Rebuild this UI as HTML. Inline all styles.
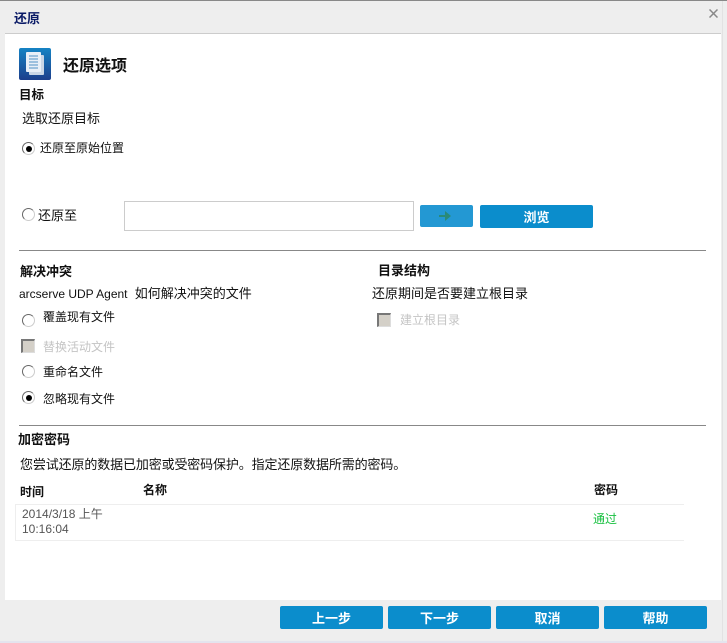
<!DOCTYPE html>
<html lang="zh"><head><meta charset="utf-8"><style>
html,body{margin:0;padding:0}
body{width:727px;height:643px;position:relative;overflow:hidden;background:#eee;font-family:"Liberation Sans","Noto Sans CJK SC",sans-serif;font-size:13px;color:#111}
.t{position:absolute;white-space:nowrap;line-height:16px}
.s{font-size:12px}
.b{font-weight:bold}
.btn{position:absolute;background:#0b8dcc;color:#fff;font-weight:bold;text-align:center;border-radius:2px;font-size:13px}
.r{position:absolute;width:11px;height:11px;border-radius:50%;border:1px solid #666;border-right-color:#ccc;border-bottom-color:#ccc;background:#fff}
.r.on:after{content:"";position:absolute;left:2.5px;top:2.5px;width:6px;height:6px;border-radius:50%;background:#000}
.c{position:absolute;width:11px;height:11px;background:#d4d0c8;border:1px solid #ddd;border-left:2px solid #777;border-top:2px solid #777}
.l{position:absolute;height:1px;background:#888}
.g{color:#c4c4c4}
</style></head><body>
<div style="position:absolute;left:0;top:0;width:727px;height:1px;background:#888"></div>
<div style="position:absolute;left:5px;top:33px;width:716px;height:567px;background:#fff;border-top:1px solid #ccc;box-sizing:border-box"></div>
<div style="position:absolute;left:722px;top:1px;width:1px;height:640px;background:#e2e2e2"></div>
<div style="position:absolute;left:0;top:641px;width:727px;height:2px;background:#e4e4ee"></div>
<div class="t b" style="left:14px;top:11px;color:#0a1a66">还原</div>
<svg style="position:absolute;left:709px;top:9px" width="9" height="9" viewBox="0 0 9 9"><path d="M.5 .5L8.500 8.500M8.500 .5L.5 8.500" stroke="#888" stroke-width="1.500" fill="none"/></svg>

<svg style="position:absolute;left:19px;top:48px" width="32" height="32" viewBox="0 0 32 32">
<defs><linearGradient id="a" x1="0" y1="0" x2="0" y2="1"><stop offset="0" stop-color="#1583c4"/><stop offset="1" stop-color="#1c3f8c"/></linearGradient></defs>
<rect width="32" height="32" rx="2" fill="url(#a)"/>
<rect x="10" y="7" width="15" height="20" rx="1" fill="#c9d6e6"/>
<rect x="7" y="4" width="15" height="20" rx="1" fill="#e8eff7"/>
<path d="M10 8h9M10 11h9M10 14h9M10 17h9M10 20h9" stroke="#6fa3d0" stroke-width="1.200"/>
</svg>
<div class="t b" style="left:63px;top:57px;font-size:16px;line-height:20px">还原选项</div>
<div class="t b" style="left:19px;top:87px;font-size:12.500px">目标</div>
<div class="t" style="left:22px;top:111px">选取还原目标</div>
<div class="r on" style="left:22px;top:142px"></div>
<div class="t s" style="left:40px;top:140px">还原至原始位置</div>

<div class="r" style="left:22px;top:208px"></div>
<div class="t" style="left:38px;top:208px">还原至</div>
<div style="position:absolute;left:124px;top:201px;width:290px;height:30px;box-sizing:border-box;border:1px solid #ccc;background:#fff"></div>
<div class="btn" style="left:420px;top:205px;width:53px;height:22px;background:#2398d3"></div>
<svg style="position:absolute;left:439px;top:209px" width="13" height="14" viewBox="0 0 13 14"><path d="M0 6h6V2l6 5-6 5V8H0z" fill="#2a8a78"/></svg>
<div class="btn" style="left:480px;top:205px;width:113px;height:23px;line-height:26px">浏览</div>
<div class="l" style="left:19px;top:250px;width:687px"></div>

<div class="t b" style="left:20px;top:264px">解决冲突</div>
<div class="t" style="left:19px;top:286px"><span style="font-size:12px">arcserve UDP Agent</span>&nbsp; 如何解决冲突的文件</div>
<div class="r" style="left:22px;top:314px"></div>
<div class="t s" style="left:43px;top:309px">覆盖现有文件</div>
<div class="c" style="left:21px;top:339px"></div>
<div class="t g s" style="left:43px;top:339px">替换活动文件</div>
<div class="r" style="left:22px;top:365px"></div>
<div class="t s" style="left:43px;top:364px">重命名文件</div>
<div class="r on" style="left:22px;top:391px"></div>
<div class="t s" style="left:43px;top:391px">忽略现有文件</div>

<div class="t b" style="left:378px;top:263px">目录结构</div>
<div class="t" style="left:372px;top:286px">还原期间是否要建立根目录</div>
<div class="c" style="left:377px;top:313px"></div>
<div class="t g s" style="left:400px;top:312px">建立根目录</div>

<div class="l" style="left:19px;top:425px;width:687px"></div>
<div class="t b" style="left:18px;top:432px">加密密码</div>
<div class="t" style="left:20px;top:457px;letter-spacing:-.13px">您尝试还原的数据已加密或受密码保护。指定还原数据所需的密码。</div>
<div class="t b s" style="left:20px;top:484px">时间</div>
<div class="t b s" style="left:143px;top:482px">名称</div>
<div class="t b s" style="left:594px;top:482px">密码</div>
<div style="position:absolute;left:15px;top:504px;width:669px;height:37px;box-sizing:border-box;border:1px solid #eee;border-right:0"></div>
<div class="t s" style="left:22px;top:507px;color:#555;line-height:15px">2014/3/18 上午<br>10:16:04</div>
<div class="t s" style="left:593px;top:511px;color:#18c040">通过</div>

<div class="btn" style="left:280px;top:606px;width:103px;height:23px;line-height:25px">上一步</div>
<div class="btn" style="left:388px;top:606px;width:103px;height:23px;line-height:25px">下一步</div>
<div class="btn" style="left:496px;top:606px;width:103px;height:23px;line-height:25px">取消</div>
<div class="btn" style="left:604px;top:606px;width:103px;height:23px;line-height:25px">帮助</div>
</body></html>
